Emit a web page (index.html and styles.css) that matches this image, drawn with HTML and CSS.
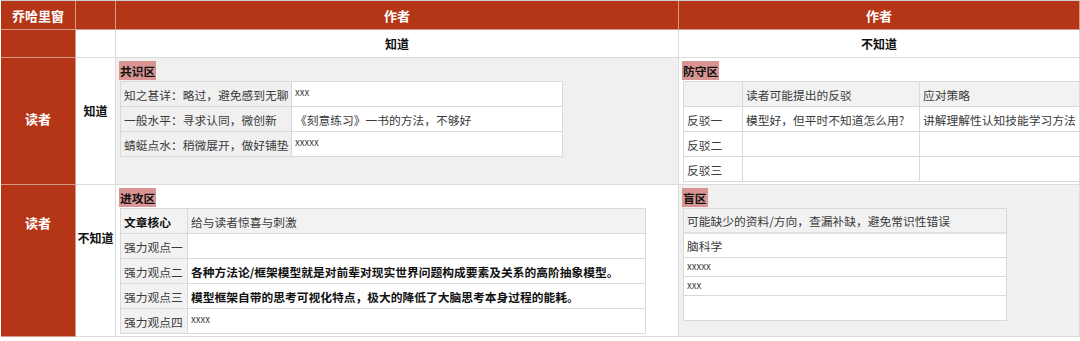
FILE: index.html
```html
<!DOCTYPE html>
<html lang="zh-CN">
<head>
  <meta charset="UTF-8" />
  <title>乔哈里窗</title>
  <link rel="stylesheet" href="styles.css">
</head>
<body>
  <div class="window">
    <!-- header row -->
    <div class="cell red title">乔哈里窗</div>
    <div class="cell red"></div>
    <div class="cell red head">作者</div>
    <div class="cell red head">作者</div>

    <!-- knows / doesn't know -->
    <div class="cell red"></div>
    <div class="cell"></div>
    <div class="cell sub">知道</div>
    <div class="cell sub">不知道</div>

    <!-- reader knows -->
    <div class="cell red side side-top">读者</div>
    <div class="cell know know-top">知道</div>
    <div class="cell quad gray">
      <span class="tag">共识区</span>
      <div class="grid consensus">
        <div class="c muted">知之甚详：略过，避免感到无聊</div>
        <div class="c white tiny">xxx</div>
        <div class="c muted">一般水平：寻求认同，微创新</div>
        <div class="c white">《刻意练习》一书的方法，不够好</div>
        <div class="c muted">蜻蜓点水：稍微展开，做好铺垫</div>
        <div class="c white tiny">xxxxx</div>
      </div>
    </div>
    <div class="cell quad">
      <span class="tag">防守区</span>
      <div class="grid defense">
        <div class="c muted"></div>
        <div class="c muted">读者可能提出的反驳</div>
        <div class="c muted">应对策略</div>
        <div class="c">反驳一</div>
        <div class="c">模型好，但平时不知道怎么用?</div>
        <div class="c">讲解理解性认知技能学习方法</div>
        <div class="c">反驳二</div>
        <div class="c"></div>
        <div class="c"></div>
        <div class="c">反驳三</div>
        <div class="c"></div>
        <div class="c"></div>
      </div>
    </div>

    <!-- reader doesn't know -->
    <div class="cell red side side-bottom">读者</div>
    <div class="cell know know-bottom">不知道</div>
    <div class="cell quad">
      <span class="tag">进攻区</span>
      <div class="grid attack">
        <div class="c muted strong">文章核心</div>
        <div class="c muted">给与读者惊喜与刺激</div>
        <div class="c muted">强力观点一</div>
        <div class="c"></div>
        <div class="c muted">强力观点二</div>
        <div class="c strong">各种方法论/框架模型就是对前辈对现实世界问题构成要素及关系的高阶抽象模型。</div>
        <div class="c muted">强力观点三</div>
        <div class="c strong">模型框架自带的思考可视化特点，极大的降低了大脑思考本身过程的能耗。</div>
        <div class="c muted">强力观点四</div>
        <div class="c tiny">xxxx</div>
      </div>
    </div>
    <div class="cell quad gray">
      <span class="tag">盲区</span>
      <div class="grid blind">
        <div class="c muted head-row">可能缺少的资料/方向，查漏补缺，避免常识性错误</div>
        <div class="c white">脑科学</div>
        <div class="c white tiny short">xxxxx</div>
        <div class="c white tiny short">xxx</div>
        <div class="c white"></div>
      </div>
    </div>
  </div>
</body>
</html>
```

FILE: styles.css
```css
* {
  margin: 0;
  padding: 0;
  box-sizing: border-box;
}
body {
  background: #fff;
  font-family: "Noto Sans CJK SC", "Noto Sans", sans-serif;
  color: #3a3a3a;
}
.window {
  display: grid;
  grid-template-columns: 75px 40px 563px 1fr;
  grid-template-rows: 29px 28px 127px 152px;
  margin-left: 1px;
  border-top: 1px solid #cfcfcf;
  overflow: hidden;
}
.cell {
  border-right: 1px solid #dcdcdc;
  border-bottom: 1px solid #dcdcdc;
  font-size: 12px;
  display: flex;
  align-items: center;
  justify-content: center;
  min-width: 0;
}
.red {
  background: #b43616;
  color: #fff;
  font-weight: bold;
  border-color: #d49a88;
}
.title {
  font-size: 13px;
}
.head {
  font-size: 13px;
}
.sub {
  color: #111;
  font-weight: bold;
}
.side {
  font-size: 13px;
  align-items: flex-start;
}
.side-top {
  padding-top: 51px;
}
.side-bottom {
  padding-top: 28px;
}
.know {
  color: #111;
  font-weight: bold;
  align-items: flex-start;
}
.know-top {
  padding-top: 44px;
}
.know-bottom {
  padding-top: 44px;
}
.quad {
  flex-direction: column;
  align-items: flex-start;
  justify-content: flex-start;
  padding: 3px 0 0 2px;
  overflow: hidden;
}
.gray {
  background: #f0f0f0;
}
.tag {
  display: block;
  height: 19px;
  line-height: 19px;
  padding: 0 1px;
  margin-left: 1px;
  background: #d99594;
  color: #111;
  font-weight: bold;
  font-size: 11.75px;
}
.grid {
  display: grid;
  margin: 1px 0 0 2px;
  border-top: 1px solid #d9d9d9;
  border-left: 1px solid #d9d9d9;
  grid-auto-rows: 25px;
  font-size: 11.75px;
}
.c {
  border-right: 1px solid #d9d9d9;
  border-bottom: 1px solid #d9d9d9;
  padding-left: 3px;
  display: flex;
  align-items: center;
  white-space: nowrap;
  overflow: hidden;
  background: #fff;
}
.c.muted {
  background: #f2f2f2;
}
.c.white {
  background: #fff;
}
.c.strong {
  color: #111;
  font-weight: bold;
}
.c.tiny {
  font-size: 9.5px;
  align-items: flex-start;
  padding-top: 3px;
}
.consensus {
  width: 443px;
  grid-template-columns: 171px 1fr;
}
.consensus .c.muted {
  background: #f0f0f0;
}
.defense {
  width: 440px;
  grid-template-columns: 59px 177px 1fr;
}
.attack {
  width: 526px;
  grid-template-columns: 67px 1fr;
}
.blind {
  width: 324px;
  grid-template-columns: 1fr;
  grid-template-rows: 25px 24px 19px 19px 25px;
}
.blind .head-row {
  border-bottom: 2px solid #e2e2e2;
}
.blind .c.short {
  padding-top: 1px;
}
```
